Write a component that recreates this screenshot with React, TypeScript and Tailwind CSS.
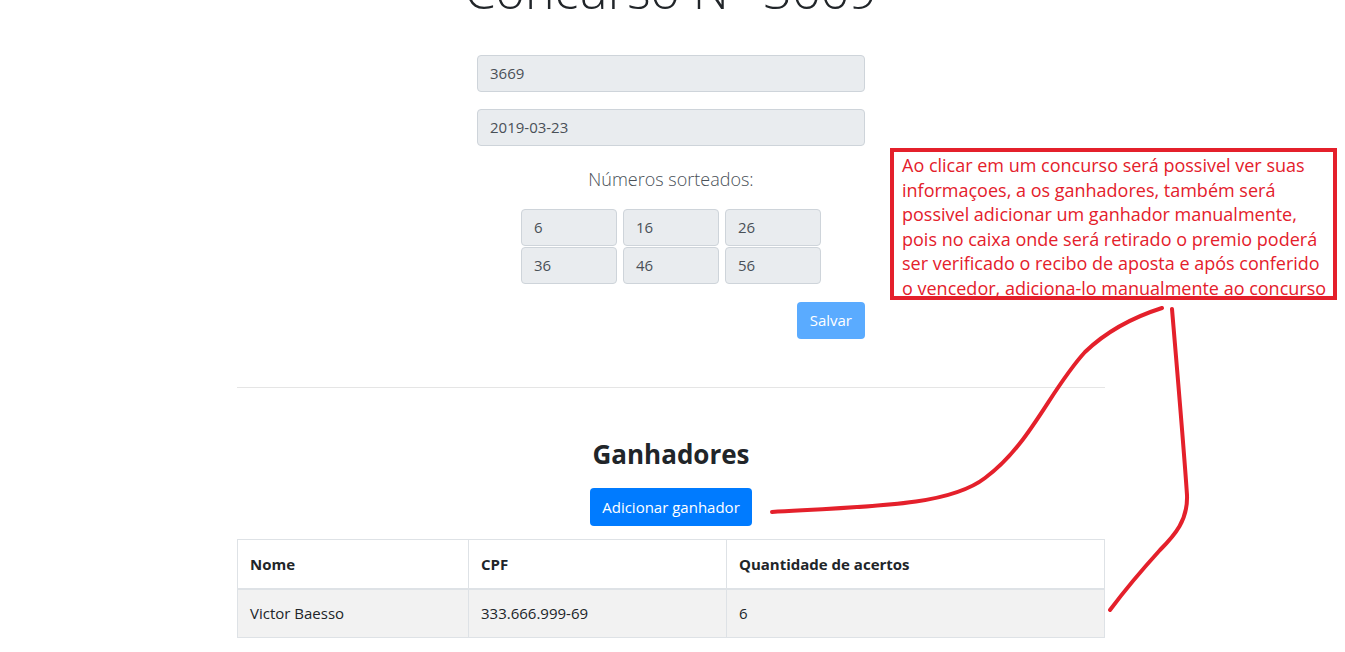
import React from "react";

const numeros = ["6", "16", "26", "36", "46", "56"];

const nota = [
  "Ao clicar em um concurso será possivel ver suas",
  "informaçoes, a os ganhadores, também será",
  "possivel adicionar um ganhador manualmente,",
  "pois no caixa onde será retirado o premio poderá",
  "ser verificado o recibo de aposta e após conferido",
  "o vencedor, adiciona-lo manualmente ao concurso",
];

export default function App() {
  return (
    <div className="relative min-h-[652px] overflow-hidden bg-white font-['Open_Sans',sans-serif] text-[#212529]">
      <div className="ml-[237px] w-[868px]">
        <h1 className="-mt-[38px] h-[56px] text-center text-[50px] font-light leading-[56px] text-[#212529]">
          Concurso N° 3669
        </h1>

        <div className="mx-auto mt-[37px] w-[388px]">
          <div className="flex h-[37px] items-center rounded border border-[#ced4da] bg-[#e9ecef] px-[12px] text-[15px] text-[#495057]">
            3669
          </div>
          <div className="mt-[17px] flex h-[37px] items-center rounded border border-[#ced4da] bg-[#e9ecef] px-[12px] text-[15px] text-[#495057]">
            2019-03-23
          </div>

          <p className="mt-[20px] text-center text-[18px] font-light leading-[26px] text-[#495057]">
            Números sorteados:
          </p>

          <div className="mx-auto mt-[17px] grid w-[300px] grid-cols-3 gap-x-[6px] gap-y-px">
            {numeros.map((n) => (
              <div
                key={n}
                className="flex h-[37px] items-center rounded border border-[#ced4da] bg-[#e9ecef] px-[12px] text-[15px] text-[#495057]"
              >
                {n}
              </div>
            ))}
          </div>

          <div className="mt-[18px] flex justify-end">
            <button className="h-[37px] rounded bg-[#5aabff] px-[13px] text-[15px] text-white">
              Salvar
            </button>
          </div>
        </div>

        <hr className="mt-[48px] border-t border-[#e5e5e5]" />

        <h2 className="mt-[50px] text-center text-[26px] font-bold leading-[32px] text-[#212529]">
          Ganhadores
        </h2>
        <div className="mt-[18px] flex justify-center">
          <button className="h-[38px] rounded bg-[#007bff] px-[12px] text-[15px] text-white">
            Adicionar ganhador
          </button>
        </div>

        <table className="mt-[13px] w-full border-collapse text-[15px]">
          <thead>
            <tr className="h-[49px]">
              <th className="w-[231px] border border-b-2 border-[#dee2e6] px-[12px] text-left font-bold">Nome</th>
              <th className="w-[258px] border border-b-2 border-[#dee2e6] px-[12px] text-left font-bold">CPF</th>
              <th className="border border-b-2 border-[#dee2e6] px-[12px] text-left font-bold">Quantidade de acertos</th>
            </tr>
          </thead>
          <tbody>
            <tr className="h-[49px] bg-[#f2f2f2]">
              <td className="border border-[#dee2e6] px-[12px]">Victor Baesso</td>
              <td className="border border-[#dee2e6] px-[12px]">333.666.999-69</td>
              <td className="border border-[#dee2e6] px-[12px]">6</td>
            </tr>
          </tbody>
        </table>
      </div>

      <div className="absolute left-[890px] top-[148px] h-[152px] w-[447px] border-[4px] border-[#e4202b] bg-white px-[8px] pt-[1px] text-[18px] leading-[24.5px] text-[#e4202b]">
        {nota.map((l) => (
          <div key={l} className="whitespace-nowrap">
            {l}
          </div>
        ))}
      </div>

      <svg className="pointer-events-none absolute left-0 top-0" width="1345" height="652" fill="none">
        <path
          d="M772 512 C 880 506, 950 505, 985 478 C 1030 445, 1050 390, 1085 352 C 1110 328, 1140 315, 1162 308"
          stroke="#e4202b"
          strokeWidth="4"
          strokeLinecap="round"
        />
        <path
          d="M1172 309 C 1178 380, 1184 450, 1187 495 C 1188 520, 1175 535, 1160 550 C 1140 572, 1125 590, 1110 610"
          stroke="#e4202b"
          strokeWidth="4"
          strokeLinecap="round"
        />
      </svg>
    </div>
  );
}
